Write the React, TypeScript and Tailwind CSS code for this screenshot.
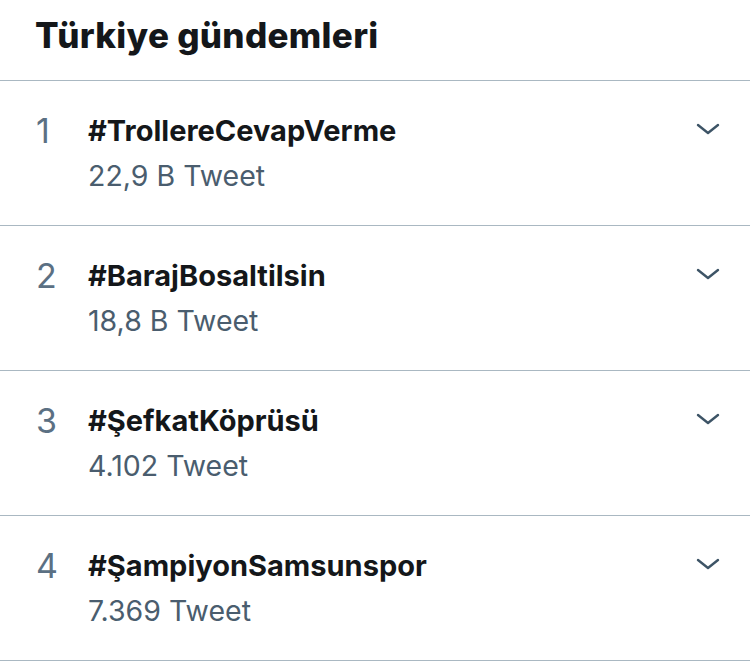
import React from 'react';

const trends = [
  { rank: 1, tag: '#TrollereCevapVerme', count: '22,9 B Tweet' },
  { rank: 2, tag: '#BarajBosaltilsin', count: '18,8 B Tweet' },
  { rank: 3, tag: '#ŞefkatKöprüsü', count: '4.102 Tweet' },
  { rank: 4, tag: '#ŞampiyonSamsunspor', count: '7.369 Tweet' },
];

const Chevron = () => (
  <svg width="24" height="24" viewBox="0 0 24 24" className="text-[#3d5466]">
    <path d="M2 8 L12 16 L22 8" fill="none" stroke="currentColor" strokeWidth="2.4" strokeLinecap="round" strokeLinejoin="round" />
  </svg>
);

const App = () => {
  return (
    <div className="w-[750px] h-[665px] bg-white overflow-hidden" style={{ fontFamily: 'Inter, "Liberation Sans", Arial, sans-serif' }}>
      <div className="h-[81px] border-b border-[#aab8c2] px-[35px] pt-[14px]">
        <h1 className="text-[35px] leading-[42px] font-extrabold tracking-[0.3px] text-[#14171a]">Türkiye gündemleri</h1>
      </div>
      {trends.map((t) => (
        <div key={t.rank} className="h-[145px] border-b border-[#aab8c2] flex pl-[36px] pr-[30px] pt-[34px]">
          <div className="w-[52px] text-[34px] leading-[32px] text-[#5b7083]">{t.rank}</div>
          <div className="flex-1 flex flex-col">
            <div className="text-[29px] leading-[32px] font-bold text-[#14171a]">{t.tag}</div>
            <div className="mt-[13px] text-[28.5px] leading-[32px] text-[#4a5d6e]">{t.count}</div>
          </div>
          <div className="pt-[2px]">
            <Chevron />
          </div>
        </div>
      ))}
    </div>
  );
};

export default App;
